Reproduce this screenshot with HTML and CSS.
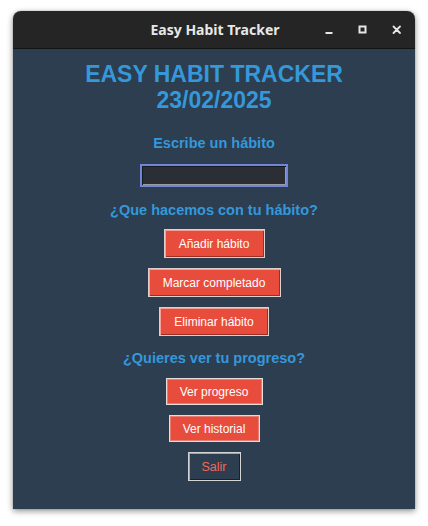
FILE: index.html
```html
<!DOCTYPE html>
<html lang="es">
<head>
<meta charset="utf-8">
<title>Easy Habit Tracker</title>
<link rel="stylesheet" href="styles.css">
</head>
<body>
<div class="window">
  <div class="titlebar">
    <span class="wtitle">Easy Habit Tracker</span>
    <div class="controls">
      <svg class="ctl" width="12" height="12" viewBox="0 0 12 12"><rect x="2.5" y="8" width="7" height="2" fill="#e6e6e6"/></svg>
      <svg class="ctl" width="12" height="12" viewBox="0 0 12 12"><rect x="2.5" y="2.5" width="6" height="6" fill="none" stroke="#e6e6e6" stroke-width="2"/></svg>
      <svg class="ctl" width="12" height="12" viewBox="0 0 12 12"><path d="M2.5 2.5 L9 9 M9 2.5 L2.5 9" stroke="#e6e6e6" stroke-width="1.8" stroke-linecap="round"/></svg>
    </div>
  </div>
  <div class="content">
    <h1 class="apptitle">EASY HABIT TRACKER<br>23/02/2025</h1>
    <p class="label label-first">Escribe un hábito</p>
    <div class="entry"></div>
    <p class="label">¿Que hacemos con tu hábito?</p>
    <div class="group">
      <button class="btn btn-raised w-add">Añadir hábito</button>
      <button class="btn btn-raised w-mark">Marcar completado</button>
      <button class="btn btn-raised w-del">Eliminar hábito</button>
    </div>
    <p class="label label-tight">¿Quieres ver tu progreso?</p>
    <div class="group group2">
      <button class="btn btn-flat w-prog">Ver progreso</button>
      <button class="btn btn-flat w-hist">Ver historial</button>
      <button class="btn btn-exit w-exit">Salir</button>
    </div>
  </div>
</div>
</body>
</html>
```
FILE: styles.css
```css
html, body {
  margin: 0;
  padding: 0;
  background: #ffffff;
}
body {
  width: 428px;
  height: 526px;
  overflow: hidden;
}
.window {
  margin: 11px 0 0 13px;
  width: 402px;
  height: 498px;
  border-radius: 8px 8px 0 0;
  overflow: hidden;
  box-shadow: 0 2px 6px rgba(0,0,0,0.45), 0 0 1px rgba(0,0,0,0.5);
  display: flex;
  flex-direction: column;
}
.titlebar {
  height: 37px;
  flex: none;
  background: #252525;
  border-bottom: 1px solid #141414;
  position: relative;
  display: flex;
  align-items: center;
  justify-content: center;
}
.wtitle {
  font-family: "Noto Sans", "DejaVu Sans", sans-serif;
  font-weight: 700;
  font-size: 14px;
  color: #e8e8e8;
  margin-left: 2px;
}
.controls {
  position: absolute;
  right: 12px;
  top: 13px;
  display: flex;
  gap: 22px;
}
.ctl { display: block; }
.content {
  flex: 1;
  background: #2c3e50;
  display: flex;
  flex-direction: column;
  align-items: center;
  padding-top: 12px;
  font-family: "Liberation Sans", Arial, sans-serif;
}
.apptitle {
  margin: 0;
  font-size: 23px;
  line-height: 26px;
  font-weight: 700;
  color: #3498db;
  text-align: center;
}
.label {
  margin: 14px 0 0;
  font-size: 14.5px;
  line-height: 18px;
  font-weight: 700;
  color: #3498db;
  text-align: center;
}
.label-first { margin-top: 21px; }
.label-tight { margin-top: 13px; }
.entry {
  margin-top: 12px;
  width: 144px;
  height: 19px;
  border: 2px solid #7286d8;
  background: #2b2e34;
  box-shadow: inset 1px 1px 0 #15181c, inset -1px -1px 0 #9c9c9c;
}
.group {
  margin-top: 10px;
  display: flex;
  flex-direction: column;
  align-items: center;
  gap: 10px;
}
.group2 { margin-top: 11px; }
.btn {
  font-family: "Liberation Sans", Arial, sans-serif;
  font-size: 12px;
  padding: 0;
  margin: 0;
  box-sizing: border-box;
  text-align: center;
  cursor: pointer;
}
.btn-raised {
  height: 29px;
  background: #e74c3c;
  color: #ffffff;
  border: 1px solid #dccfcc;
  box-shadow: inset 1px 1px 0 #f4a196, inset -1px -1px 0 #9f2d21;
}
.btn-flat {
  height: 27px;
  background: #e74c3c;
  color: #ffffff;
  border: 1px solid #e2dcdb;
  box-shadow: inset 0 0 0 1px rgba(230,220,220,0.35);
}
.btn-exit {
  height: 29px;
  background: #2c3e50;
  color: #f4675a;
  border: 1px solid #d4d4d4;
  box-shadow: inset 1px 1px 0 #9ea4aa, inset -1px -1px 0 #18222c;
  font-size: 12.5px;
}
.w-add { width: 101px; }
.w-mark { width: 133px; }
.w-del { width: 110px; }
.w-prog { width: 97px; }
.w-hist { width: 91px; }
.w-exit { width: 53px; }
```
